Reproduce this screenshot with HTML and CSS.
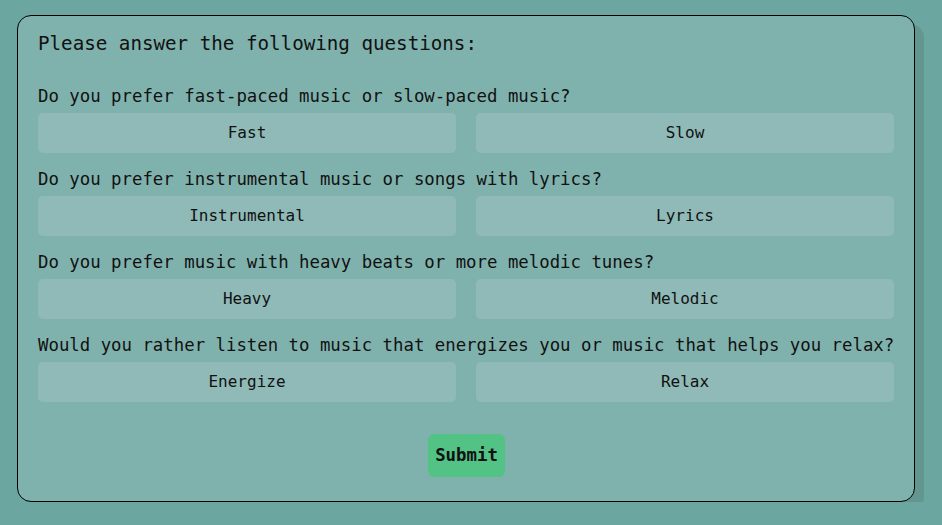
FILE: index.html
```html
<!DOCTYPE html>
<html>
<head>
<meta charset="utf-8">
<link rel="stylesheet" href="styles.css">
</head>
<body>
<div class="panel">
  <div class="title">Please answer the following questions:</div>
  <div class="group">
    <div class="question">Do you prefer fast-paced music or slow-paced music?</div>
    <div class="choices"><button class="choice">Fast</button><button class="choice">Slow</button></div>
  </div>
  <div class="group">
    <div class="question">Do you prefer instrumental music or songs with lyrics?</div>
    <div class="choices"><button class="choice">Instrumental</button><button class="choice">Lyrics</button></div>
  </div>
  <div class="group">
    <div class="question">Do you prefer music with heavy beats or more melodic tunes?</div>
    <div class="choices"><button class="choice">Heavy</button><button class="choice">Melodic</button></div>
  </div>
  <div class="group">
    <div class="question">Would you rather listen to music that energizes you or music that helps you relax?</div>
    <div class="choices"><button class="choice">Energize</button><button class="choice">Relax</button></div>
  </div>
  <div class="actions"><button class="submit">Submit</button></div>
</div>
</body>
</html>
```
FILE: styles.css
```css
html, body {
  margin: 0;
  padding: 0;
}
body {
  background: #6ca6a1;
  font-family: "DejaVu Sans Mono", monospace;
  color: #111;
  padding: 15px 0 0 17px;
}
.panel {
  box-sizing: border-box;
  width: 898px;
  background: #80b2ad;
  border: 1px solid #000;
  border-radius: 14px;
  box-shadow: 9px 9px 0 #62968f;
  padding: 17px 20px 24px 20px;
}
.title {
  font-size: 19.2px;
  line-height: 22px;
  margin-bottom: 29px;
}
.group {
  margin-bottom: 14px;
}
.question {
  font-size: 17.35px;
  line-height: 24px;
  margin-bottom: 5px;
  white-space: nowrap;
}
.choices {
  display: grid;
  grid-template-columns: 1fr 1fr;
  gap: 20px;
}
.choice {
  height: 40px;
  border: none;
  border-radius: 5px;
  background: #8fbab7;
  font-family: "DejaVu Sans Mono", monospace;
  font-size: 16px;
  line-height: 18px;
  color: #111;
  padding: 0;
}
.actions {
  display: flex;
  justify-content: center;
  margin-top: 32px;
}
.submit {
  border: none;
  border-radius: 6px;
  background: #52c285;
  font-family: "DejaVu Sans Mono", monospace;
  font-weight: bold;
  font-size: 17.35px;
  line-height: 21px;
  padding: 11px 7px;
  color: #111;
  margin-left: 1px;
}
```
